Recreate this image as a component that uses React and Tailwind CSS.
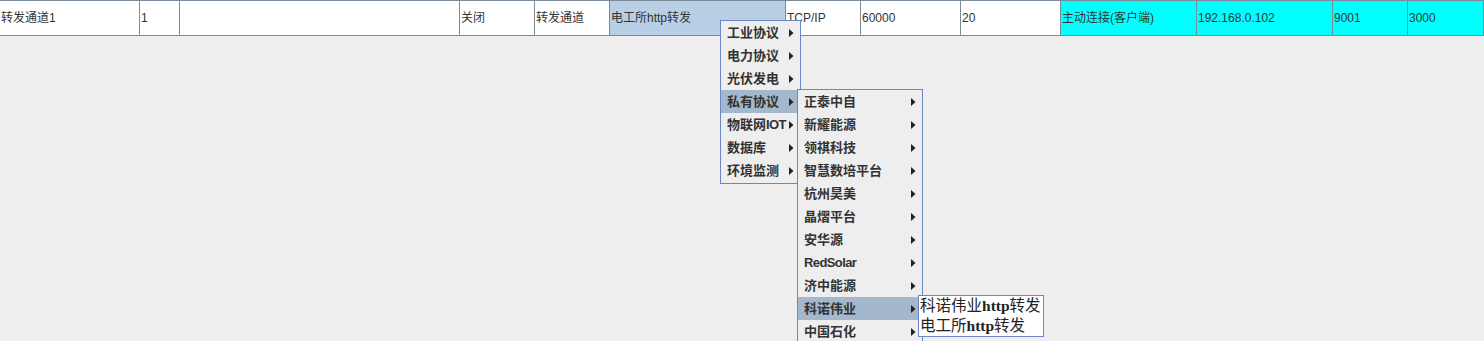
import React from "react";

const cells = [
  { w: 140, t: "转发通道1", bg: "bg-white" },
  { w: 40, t: "1", bg: "bg-white" },
  { w: 280, t: "", bg: "bg-white" },
  { w: 75, t: "关闭", bg: "bg-white" },
  { w: 75, t: "转发通道", bg: "bg-white" },
  { w: 176, t: "电工所http转发", bg: "bg-[#b8cfe5]" },
  { w: 75, t: "TCP/IP", bg: "bg-white" },
  { w: 100, t: "60000", bg: "bg-white" },
  { w: 100, t: "20", bg: "bg-white" },
  { w: 136, t: "主动连接(客户端)", bg: "bg-[#00ffff]" },
  { w: 136, t: "192.168.0.102", bg: "bg-[#00ffff]" },
  { w: 75, t: "9001", bg: "bg-[#00ffff]" },
  { w: 76, t: "3000", bg: "bg-[#00ffff]" },
];

const menu1 = ["工业协议", "电力协议", "光伏发电", "私有协议", "物联网IOT", "数据库", "环境监测"];
const menu2 = [
  "正泰中自",
  "新耀能源",
  "领祺科技",
  "智慧数培平台",
  "杭州昊美",
  "晶熠平台",
  "安华源",
  "RedSolar",
  "济中能源",
  "科诺伟业",
  "中国石化",
];

function Arrow() {
  return (
    <svg width="5" height="8" viewBox="0 0 5 8" className="shrink-0">
      <path d="M0 0 L4.5 4 L0 8 Z" fill="#222" />
    </svg>
  );
}

function Label({ label }) {
  const m = label.match(/^([^A-Za-z]*)([A-Za-z]+)$/);
  if (m) {
    return (
      <span className="leading-none whitespace-nowrap">
        {m[1]}
        <span className="tracking-[-0.6px]">{m[2]}</span>
      </span>
    );
  }
  return <span className="leading-none whitespace-nowrap">{label}</span>;
}

function MenuItem({ label, active }) {
  return (
    <div
      className={`h-[23px] flex items-center justify-between pl-[6px] pr-[6px] text-[13px] font-bold text-[#333333] ${
        active ? "bg-[#a3b8cc]" : ""
      }`}
    >
      <Label label={label} />
      <Arrow />
    </div>
  );
}

export default function App() {
  return (
    <div
      className="relative w-[1484px] h-[341px] bg-[#eeeeee] overflow-hidden"
      style={{ fontFamily: '"Liberation Sans", "Noto Sans CJK SC", sans-serif' }}
    >
      <div className="flex h-[36px] border-t border-b border-[#7a8a99]">
        {cells.map((c, i) => (
          <div
            key={i}
            className={`${c.bg} h-full flex items-center pl-px border-r border-[#7a8a99] text-[12px] text-[#333333] whitespace-nowrap overflow-hidden shrink-0`}
            style={{ width: c.w }}
          >
            {c.t}
          </div>
        ))}
      </div>

      {/* Menu level 1 */}
      <div className="absolute left-[720px] top-[20px] w-[81px] border border-[#6a87c6] bg-[#eeeeee] pb-px">
        {menu1.map((m) => (
          <MenuItem key={m} label={m} active={m === "私有协议"} />
        ))}
      </div>

      {/* Menu level 2 */}
      <div className="absolute left-[797px] top-[89px] w-[126px] border border-[#6a87c6] bg-[#eeeeee]">
        {menu2.map((m) => (
          <MenuItem key={m} label={m} active={m === "科诺伟业"} />
        ))}
      </div>

      {/* Menu level 3 */}
      <div
        className="absolute left-[918px] top-[295px] w-[126px] border border-[#6a87c6] bg-white text-[15.5px] text-[#222222]"
        style={{ fontFamily: '"Liberation Serif", "Noto Sans CJK SC", serif' }}
      >
        <div className="h-[20px] flex items-center pl-px whitespace-nowrap leading-none">
          科诺伟业<span className="font-bold">http</span>转发
        </div>
        <div className="h-[20px] flex items-center pl-px whitespace-nowrap leading-none">
          电工所<span className="font-bold">http</span>转发
        </div>
      </div>
    </div>
  );
}
